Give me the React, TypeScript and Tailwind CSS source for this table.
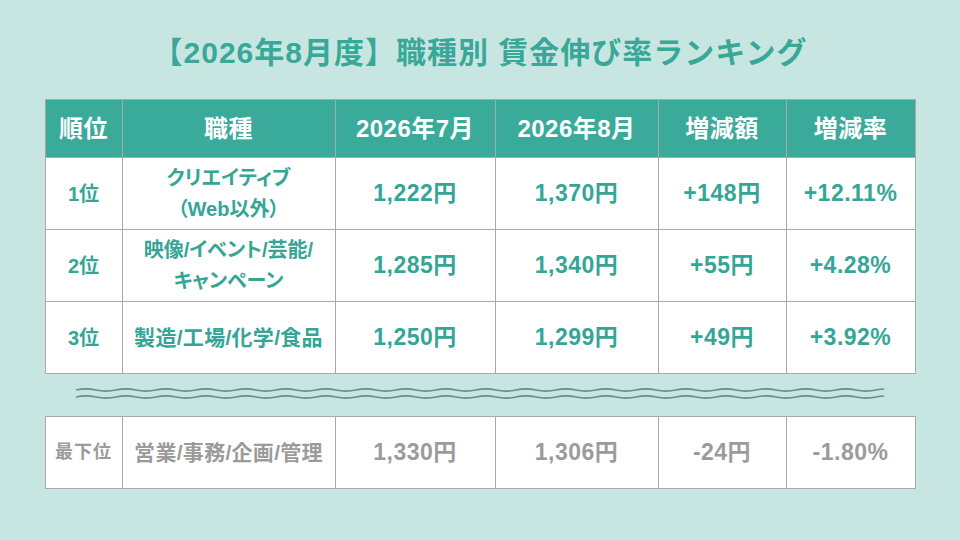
const FONT = { fontFamily: '"Liberation Sans", "Noto Sans CJK JP", sans-serif' }

const cols = ["w-[77px]", "w-[213px]", "w-[160px]", "w-[163px]", "w-[128px]", "w-[129px]"]

const headers = ["順位", "職種", "2026年7月", "2026年8月", "増減額", "増減率"]

const rows = [
  { rank: "1位", job: ["クリエイティブ", "（Web以外）"], kana: true, jul: "1,222円", aug: "1,370円", diff: "+148円", rate: "+12.11%" },
  { rank: "2位", job: ["映像/イベント/芸能/", "キャンペーン"], kana: true, jul: "1,285円", aug: "1,340円", diff: "+55円", rate: "+4.28%" },
  { rank: "3位", job: ["製造/工場/化学/食品"], jul: "1,250円", aug: "1,299円", diff: "+49円", rate: "+3.92%" },
]

function Wave({ y }: { y: number }) {
  // quadratic wave, period 40px
  let d = `M0 ${y} q10 -2.2 20 0`
  for (let i = 0; i < 40; i++) d += " t20 0"
  return <path d={d} fill="none" stroke="#6e8a86" strokeWidth="1.6" />
}

type RowProps = { rank: string; job: string[]; kana?: boolean; jul: string; aug: string; diff: string; rate: string; muted?: boolean }

function Row({ rank, job, kana, jul, aug, diff, rate, muted }: RowProps) {
  const color = muted ? "text-[#9b9b9b]" : "text-[#35a696]"
  return (
    <tr className={`h-[72px] bg-white font-bold ${color}`}>
      <td className={`border border-[#a9a9a9] text-center ${muted ? "text-[18px] tracking-[1px]" : "text-[20px]"}`}>{rank}</td>
      <td
        className={`border border-[#a9a9a9] text-center leading-[31px] ${
          kana ? "text-[20px] [font-feature-settings:'palt']" : "text-[21px] tracking-[0.3px]"
        }`}
      >
        {job.map((l) => (
          <div key={l}>{l}</div>
        ))}
      </td>
      <td className="border border-[#a9a9a9] text-center text-[23px] tracking-[0.5px]">{jul}</td>
      <td className="border border-[#a9a9a9] text-center text-[23px] tracking-[0.5px]">{aug}</td>
      <td className="border border-[#a9a9a9] text-center text-[23px] tracking-[0.5px]">{diff}</td>
      <td className="border border-[#a9a9a9] text-center text-[23px] tracking-[0.5px]">{rate}</td>
    </tr>
  )
}

function Cols() {
  return (
    <colgroup>
      {cols.map((c, i) => (
        <col key={i} className={c} />
      ))}
    </colgroup>
  )
}

export default function App() {
  return (
    <div style={FONT} className="w-[960px] h-[540px] bg-[#c8e6e1] flex flex-col items-center overflow-hidden">
      <h1 className="mt-[33px] text-[30px] leading-[40px] font-bold text-[#38a898] tracking-[1px]">
        【2026年8月度】職種別 賃金伸び率ランキング
      </h1>

      <table className="mt-[26px] w-[870px] table-fixed border-collapse">
        <Cols />
        <thead>
          <tr className="h-[58px] bg-[#3aab9b] text-white font-bold text-[24px] tracking-[0.5px]">
            {headers.map((h) => (
              <th key={h} className="border border-[#a9a9a9] text-center font-bold">
                {h}
              </th>
            ))}
          </tr>
        </thead>
        <tbody>
          {rows.map((r) => (
            <Row key={r.rank} {...r} />
          ))}
        </tbody>
      </table>

      <svg width="808" height="14" viewBox="0 0 808 14" className="mt-[12px]">
        <Wave y={4} />
        <Wave y={11} />
      </svg>

      <table className="mt-[16px] w-[870px] table-fixed border-collapse">
        <Cols />
        <tbody>
          <Row rank="最下位" job={["営業/事務/企画/管理"]} jul="1,330円" aug="1,306円" diff="-24円" rate="-1.80%" muted />
        </tbody>
      </table>
    </div>
  )
}
